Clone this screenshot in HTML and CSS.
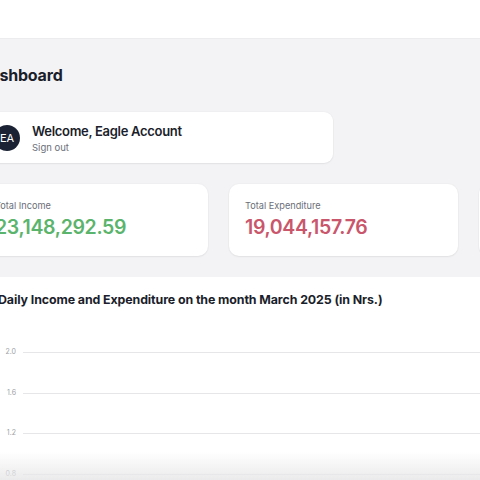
FILE: index.html
```html
<!DOCTYPE html>
<html>
<head>
<meta charset="utf-8">
<link rel="stylesheet" href="styles.css">
</head>
<body>
<header class="topbar"></header>
<main class="main">
  <div class="content">
    <h1 class="page-title">Dashboard</h1>
    <section class="welcome card">
      <div class="avatar">EA</div>
      <div class="welcome-text">
        <div class="welcome-name">Welcome, Eagle Account</div>
        <div class="signout">Sign out</div>
      </div>
    </section>
    <section class="stats">
      <div class="card stat">
        <div class="stat-label">Total Income</div>
        <div class="stat-value income">23,148,292.59</div>
      </div>
      <div class="card stat">
        <div class="stat-label">Total Expenditure</div>
        <div class="stat-value expense">19,044,157.76</div>
      </div>
      <div class="card stat">
        <div class="stat-label">Balance</div>
        <div class="stat-value">4,104,134.83</div>
      </div>
    </section>
    <section class="chart-card">
      <h2 class="chart-title">Daily Income and Expenditure on the month March 2025 (in Nrs.)</h2>
      <div class="chart">
        <div class="row"><span class="tick">2.0</span><span class="grid"></span></div>
        <div class="row"><span class="tick">1.6</span><span class="grid"></span></div>
        <div class="row"><span class="tick">1.2</span><span class="grid"></span></div>
        <div class="row"><span class="tick">0.8</span><span class="grid"></span></div>
      </div>
    </section>
  </div>
</main>
<div class="fade"></div>
</body>
</html>
```
FILE: styles.css
```css
* { box-sizing: border-box; }
html, body { margin: 0; padding: 0; }
body {
  font-family: Inter, "Noto Sans", "Liberation Sans", sans-serif;
  color: #1b1e2b;
  background: #f3f3f6;
  width: 480px;
  height: 480px;
  overflow: hidden;
}
.topbar {
  height: 39px;
  background: #ffffff;
  border-bottom: 1px solid #ececef;
}
.main {
  background: #f3f3f6;
}
.content {
  margin-left: -21px;
  width: 1100px;
  padding-top: 25px;
}
.page-title {
  margin: 0 0 26px 0;
  font-size: 16px;
  line-height: 22px;
  font-weight: 700;
  letter-spacing: -0.2px;
  color: #1b1e2b;
}
.card {
  background: #ffffff;
  border-radius: 9px;
  box-shadow: 0 1px 2px rgba(0,0,0,0.06), 0 0 0 1px rgba(0,0,0,0.015);
}
.welcome {
  width: 354px;
  height: 51px;
  display: flex;
  align-items: center;
  gap: 12px;
  padding: 0 15px;
  margin-bottom: 21px;
}
.avatar {
  width: 26px;
  height: 26px;
  border-radius: 50%;
  background: #1b2233;
  color: #ffffff;
  font-size: 11px;
  line-height: 26px;
  text-align: center;
  flex: none;
}
.welcome-text { display: flex; flex-direction: column; margin-top: 2px; }
.welcome-name {
  font-size: 13px;
  line-height: 17px;
  font-weight: 600;
  letter-spacing: -0.3px;
}
.signout {
  font-size: 9.5px;
  line-height: 13px;
  color: #6b6e78;
  margin-top: 1px;
}
.stats {
  display: grid;
  grid-template-columns: 229px 229px 229px;
  gap: 21px;
  margin-bottom: 21px;
}
.stat {
  height: 72px;
  padding: 15px 16px;
  border-radius: 10px;
}
.stat-label {
  font-size: 9.2px;
  line-height: 14px;
  color: #6b6e78;
}
.stat-value {
  font-size: 19.5px;
  line-height: 26px;
  font-weight: 600;
  letter-spacing: -0.35px;
  margin-top: 1px;
}
.income { color: #5bb46c; }
.expense { color: #c9566b; }
.chart-card {
  background: #ffffff;
  padding: 14px 20px 0 20px;
  height: 400px;
}
.chart-title {
  margin: 0 0 0 -1px;
  font-size: 12.4px;
  line-height: 18px;
  font-weight: 700;
  letter-spacing: -0.1px;
}
.chart {
  margin-top: 43px;
  display: grid;
  grid-auto-rows: 40.7px;
  margin-left: 1px;
}
.row {
  display: flex;
  align-items: flex-start;
  gap: 7px;
}
.tick {
  width: 16px;
  text-align: right;
  font-size: 7px;
  line-height: 8px;
  color: #9d9fa5;
  margin-top: -4px;
  flex: none;
}
.grid {
  flex: 1;
  border-top: 1px solid #e6e6e8;
}
.fade {
  position: fixed;
  left: 0;
  right: 0;
  bottom: 0;
  height: 28px;
  background: linear-gradient(to bottom, rgba(236,236,238,0), rgba(232,232,234,0.9));
  pointer-events: none;
}
```
